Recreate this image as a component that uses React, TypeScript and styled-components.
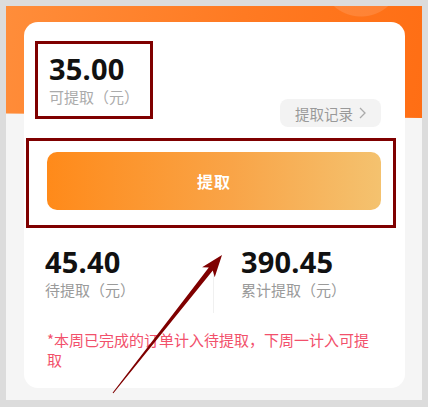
import React from "react";
import styled, { createGlobalStyle } from "styled-components";

const Global = createGlobalStyle`
  html, body { margin: 0; padding: 0; background: #dcdcdc; }
  body { font-family: "Noto Sans", "Noto Sans CJK SC", sans-serif; }
`;

const Frame = styled.div`
  position: relative;
  width: 428px;
  height: 407px;
  padding: 6px 6px 7px 6px;
  box-sizing: border-box;
  background: #dcdcdc;
`;

const Screen = styled.div`
  position: relative;
  width: 416px;
  height: 394px;
  background: #f5f5f5;
  overflow: hidden;
  &::before {
    content: "";
    position: absolute;
    left: 0;
    top: 0;
    right: 0;
    height: 112px;
    background:
      radial-gradient(circle at 355px -30px, rgba(255, 255, 255, 0.12) 0 40px, transparent 41px),
      linear-gradient(100deg, #ff8d3a 0%, #ff7a22 55%, #ff6e14 100%);
    clip-path: polygon(0 0, 100% 0, 100% 100%, 0 96%);
  }
`;

const Card = styled.div`
  position: relative;
  margin: 16px 17px 0 18px;
  height: 366px;
  background: #fff;
  border-radius: 14px;
  display: flex;
  flex-direction: column;
`;

const TopRow = styled.div`
  display: flex;
  justify-content: space-between;
  align-items: flex-start;
  padding: 19px 24px 0 11px;
`;

const Marker = styled.div`
  border: 3px solid #7f0000;
  box-sizing: border-box;
`;

const AmountBox = styled(Marker)`
  width: 118px;
  height: 78px;
  padding: 8px 0 0 11px;
`;

const Amount = styled.div`
  font-size: 29px;
  font-weight: 700;
  color: #111;
  line-height: 34px;
  letter-spacing: 0.2px;
`;

const Label = styled.div<{ $tone?: string }>`
  font-size: 15px;
  line-height: 21px;
  color: ${(p) => p.$tone || "#ababab"};
  font-family: "Noto Sans CJK SC", sans-serif;
`;

const RecordPill = styled.div`
  margin-top: 58px;
  height: 28px;
  width: 101px;
  box-sizing: border-box;
  border-radius: 8px;
  background: #f3f3f3;
  color: #999;
  font-size: 14.5px;
  font-family: "Noto Sans CJK SC", sans-serif;
  display: flex;
  align-items: center;
  justify-content: center;
  gap: 6px;
`;

const ButtonBox = styled(Marker)`
  margin: 11px 9px 0 2px;
  height: 90px;
  padding: 11px 12px 0 18px;
`;

const WithdrawButton = styled.div`
  height: 58px;
  border-radius: 10px;
  background: linear-gradient(90deg, #ff8a1a 0%, #f9a447 55%, #f4c26f 100%);
  color: #fff;
  font-size: 16px;
  font-weight: 700;
  font-family: "Noto Sans CJK SC", sans-serif;
  display: flex;
  align-items: center;
  justify-content: center;
  letter-spacing: 1px;
`;

const Stats = styled.div`
  display: grid;
  grid-template-columns: 189px 1fr;
  margin-top: 17px;
`;

const Stat = styled.div<{ $divider?: boolean }>`
  position: relative;
  padding-left: ${(p) => (p.$divider ? "28px" : "21px")};
  &::before {
    content: "";
    display: ${(p) => (p.$divider ? "block" : "none")};
    position: absolute;
    left: 0;
    top: 16px;
    width: 1px;
    height: 52px;
    background: #f0f0f0;
  }
`;

const Note = styled.div`
  margin: 30px 30px 0 23px;
  font-size: 15px;
  line-height: 20px;
  color: #f2506b;
  font-family: "Noto Sans CJK SC", sans-serif;
`;

const ArrowLayer = styled.svg`
  position: absolute;
  left: 0;
  top: 0;
  width: 428px;
  height: 407px;
  pointer-events: none;
`;

function Chevron() {
  return (
    <svg width="7" height="12" viewBox="0 0 7 12">
      <path d="M1 1l5 5-5 5" fill="none" stroke="#aaa" strokeWidth="1.3" />
    </svg>
  );
}

export default function App() {
  return (
    <>
      <Global />
      <Frame>
        <Screen>
          <Card>
            <TopRow>
              <AmountBox>
                <Amount>35.00</Amount>
                <Label>可提取（元）</Label>
              </AmountBox>
              <RecordPill>
                提取记录
                <Chevron />
              </RecordPill>
            </TopRow>
            <ButtonBox>
              <WithdrawButton>提取</WithdrawButton>
            </ButtonBox>
            <Stats>
              <Stat>
                <Amount>45.40</Amount>
                <Label $tone="#9a9a9a">待提取（元）</Label>
              </Stat>
              <Stat $divider>
                <Amount>390.45</Amount>
                <Label $tone="#9a9a9a">累计提取（元）</Label>
              </Stat>
            </Stats>
            <Note>*本周已完成的订单计入待提取，下周一计入可提取</Note>
          </Card>
        </Screen>
        <ArrowLayer viewBox="0 0 428 407">
          <polygon
            points="113.4,393.3 212.8,270.6 214.7,277.2 222,255 202.1,267.2 208.8,267.5 112.6,392.7"
            fill="#7f0000"
          />
        </ArrowLayer>
      </Frame>
    </>
  );
}
